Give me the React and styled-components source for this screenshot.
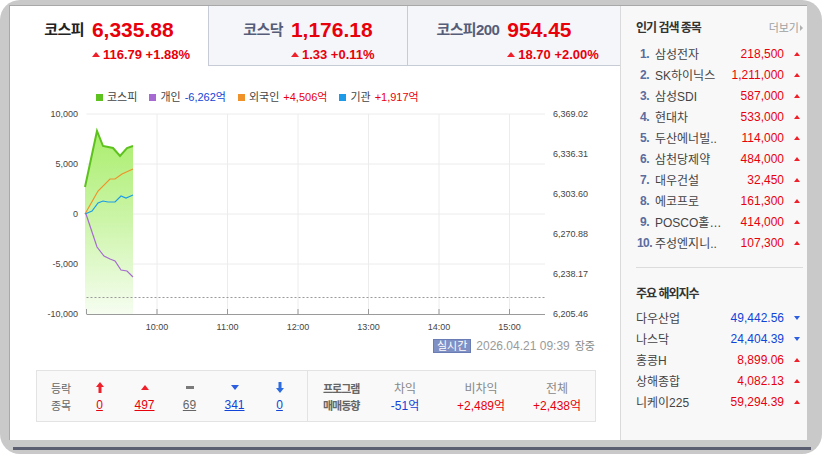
import styled, { createGlobalStyle } from "styled-components";

const GlobalStyle = createGlobalStyle`
    body {
        margin: 0;
        background: #fff;
        font-family: "Liberation Sans", "Noto Sans CJK KR", sans-serif;
    }
`;

const RED = "#e8000b";
const BLUE = "#1144d8";

const Frame = styled.div`
    width: 822px;
    height: 454px;
    box-sizing: border-box;
    background: #c9c9c9;
    border-radius: 20px;
    padding: 5px 15px 4px 9px;
    display: flex;
    flex-direction: column;
    gap: 7px;
`;

const Window = styled.div`
    height: 435px;
    display: flex;
    background: #fff;
    border-top: 1px solid #a8a8a8;
    box-sizing: border-box;
`;

const Ledge = styled.div`
    height: 3px;
    margin: 0 -4px 0 4px;
    background: #5b5e70;
`;

const Main = styled.div`
    width: 611px;
    border-left: 1px solid #a8a8a8;
    box-sizing: border-box;
    display: flex;
    flex-direction: column;
`;

const Tabs = styled.div`
    display: flex;
    height: 60px;
`;

const Tab = styled.div`
    width: ${(p) => p.$w}px;
    box-sizing: border-box;
    background: ${(p) => (p.$active ? "#fff" : "#f5f6fa")};
    border-left: ${(p) => (p.$first ? "none" : "1px solid #c7cbd6")};
    border-bottom: 1px solid ${(p) => (p.$active ? "#fff" : "#c7cbd6")};
    display: flex;
    justify-content: center;
    padding: 12px ${(p) => p.$pr || 0}px 0 0;
`;

const TabGrid = styled.div`
    display: grid;
    grid-template-columns: auto auto;
    column-gap: 8px;
    align-items: center;
    align-content: start;
`;

const TabLabel = styled.div`
    font-size: 15px;
    font-weight: bold;
    letter-spacing: -0.6px;
    line-height: 24px;
    color: ${(p) => (p.$active ? "#222" : "#555d78")};
`;

const TabPrice = styled.div`
    font-size: 21px;
    font-weight: bold;
    line-height: 24px;
    color: ${RED};
`;

const TabChange = styled.div`
    grid-column: 2;
    width: 0;
    white-space: nowrap;
    font-size: 13px;
    font-weight: bold;
    line-height: 15px;
    margin-top: 5px;
    color: ${RED};
    display: flex;
    align-items: center;
    gap: 3px;
`;

const Tri = styled.span`
    display: inline-block;
    width: 0;
    height: 0;
    border-left: ${(p) => p.$s || 4}px solid transparent;
    border-right: ${(p) => p.$s || 4}px solid transparent;
    ${(p) =>
        p.$down
            ? `border-top: ${(p.$s || 4) + 1}px solid #2c5fe0;`
            : `border-bottom: ${(p.$s || 4) + 1}px solid #f0202a;`}
`;

const Body = styled.div`
    padding: 0 24px 0 26px;
    display: flex;
    flex-direction: column;
`;

const Legend = styled.div`
    display: flex;
    gap: 12px;
    margin-top: 24px;
    padding-left: 60px;
    font-size: 11px;
    line-height: 14px;
    color: #444;
`;

const LegendItem = styled.div`
    display: flex;
    align-items: center;
    gap: 4px;
`;

const Swatch = styled.span`
    width: 7px;
    height: 7px;
    background: ${(p) => p.$c};
`;

const Num = styled.span`
    color: ${(p) => p.$c};
    text-decoration: ${(p) => (p.$u ? "underline" : "none")};
`;

const Status = styled.div`
    margin-top: 5px;
    display: flex;
    justify-content: flex-end;
    align-items: center;
    gap: 5px;
    padding-right: 1px;
    line-height: 14px;
`;

const Badge = styled.span`
    background: #7f90c4;
    border: 1px solid #6a7cb4;
    color: #fff;
    font-size: 11px;
    line-height: 12px;
    padding: 0 3px;
`;

const StampText = styled.span`
    color: ${(p) => p.$c};
    font-size: ${(p) => p.$fs}px;
`;

const StatBox = styled.div`
    margin-top: 17px;
    display: flex;
    height: 52px;
    box-sizing: border-box;
    border: 1px solid #e3e3e3;
    background: #f9f9f9;
`;

const RiseFall = styled.div`
    width: 268px;
    border-right: 1px solid #e3e3e3;
    display: grid;
    grid-template-columns: 26px repeat(5, 45px);
    grid-auto-rows: 17px;
    padding: 8px 0 0 14px;
    align-items: center;
    justify-items: center;
    font-size: 12px;
`;

const Program = styled.div`
    display: grid;
    grid-template-columns: 44px repeat(3, 76px);
    grid-auto-rows: 17px;
    padding: 8px 0 0 15px;
    align-items: center;
    justify-items: center;
    font-size: 12px;
`;

const BoxLabel = styled.span`
    justify-self: start;
    font-size: 11px;
    color: #666;
    font-weight: ${(p) => (p.$bold ? "bold" : "normal")};
    letter-spacing: ${(p) => (p.$bold ? "-1px" : "0")};
`;

const ColHead = styled.span`
    color: #888;
    font-size: 12px;
`;

const Side = styled.div`
    width: 187px;
    box-sizing: border-box;
    background: #f8f8f9;
    border-left: 1px solid #dadada;
    padding: 15px 4px 0 15px;
    display: flex;
    flex-direction: column;
`;

const SideHead = styled.div`
    display: flex;
    justify-content: space-between;
    align-items: center;
    line-height: 14px;
    margin-top: ${(p) => p.$mt || 0}px;
`;

const SideTitle = styled.div`
    font-size: 12px;
    font-weight: bold;
    letter-spacing: -1px;
    color: #333;
`;

const More = styled.div`
    font-size: 11px;
    color: #a0a0a0;
    display: flex;
    align-items: center;
    gap: 1px;
    &::after {
        content: "";
        border-top: 3px solid transparent;
        border-bottom: 3px solid transparent;
        border-left: 3px solid #b0b0b0;
    }
`;

const List = styled.div`
    display: flex;
    flex-direction: column;
    margin-top: ${(p) => p.$mt}px;
`;

const Row = styled.div`
    display: flex;
    align-items: center;
    height: 21px;
    font-size: 12px;
`;

const Rank = styled.span`
    width: 17px;
    text-align: center;
    font-weight: bold;
    color: #5b6c9d;
    letter-spacing: -0.5px;
`;

const Name = styled.span`
    flex: 1;
    margin-left: ${(p) => p.$ml || 0}px;
    color: #444;
    white-space: nowrap;
`;

const Value = styled.span`
    color: ${(p) => p.$c};
    margin-right: 7px;
`;

const Mark = styled.span`
    width: 12px;
    display: flex;
    justify-content: center;
    padding-top: 1px;
`;

const Divider = styled.div`
    height: 1px;
    background: #dcdcdc;
    margin-top: 14px;
`;

const popular = [
    ["삼성전자", "218,500"],
    ["SK하이닉스", "1,211,000"],
    ["삼성SDI", "587,000"],
    ["현대차", "533,000"],
    ["두산에너빌..", "114,000"],
    ["삼천당제약", "484,000"],
    ["대우건설", "32,450"],
    ["에코프로", "161,300"],
    ["POSCO홀…", "414,000"],
    ["주성엔지니..", "107,300"],
];

const overseas = [
    ["다우산업", "49,442.56", true],
    ["나스닥", "24,404.39", true],
    ["홍콩H", "8,899.06", false],
    ["상해종합", "4,082.13", false],
    ["니케이225", "59,294.39", false],
];

const X0 = 50.5;
const HOUR = 70.5;
const green = [[49, 83], [61, 27], [67, 42], [77, 44], [84, 52], [91, 44], [97, 42]];
const orange = [[49, 110], [62, 87], [74, 75], [79, 75], [86, 70], [97, 65]];
const blueLine = [[49, 110], [56, 107], [62, 99], [67, 97], [72, 98], [79, 98], [85, 92], [90, 94], [97, 91]];
const purple = [[50, 110], [55, 125], [61, 143], [68, 152], [74, 155], [79, 157], [85, 166], [91, 167], [97, 173]];

const pts = (a) => a.map((p) => p.join(",")).join(" ");

const Chart = () => {
    const hours = [1, 2, 3, 4, 5, 6].map((i) => X0 + HOUR * i);
    const left = ["10,000", "5,000", "0", "-5,000", "-10,000"];
    const right = ["6,369.02", "6,336.31", "6,303.60", "6,270.88", "6,238.17", "6,205.46"];
    return (
        <svg width="560" height="230" style={{ display: "block" }}>
            <defs>
                <linearGradient id="area" x1="0" y1="0" x2="0" y2="1">
                    <stop offset="0" stopColor="#a9ee6c" />
                    <stop offset="0.5" stopColor="#cdf5aa" />
                    <stop offset="1" stopColor="#f6fdf1" />
                </linearGradient>
            </defs>
            {[10, 60, 110, 160].map((y) => (
                <line key={y} x1={X0} x2="509" y1={y} y2={y} stroke="#ececec" />
            ))}
            {hours.map((x) => (
                <line key={x} x1={x} x2={x} y1="10" y2="210" stroke="#ececec" />
            ))}
            <polygon points={`49,210 ${pts(green)} 97,210`} fill="url(#area)" />
            <line x1={X0} x2="509" y1="193.5" y2="193.5" stroke="#9a9a9a" strokeDasharray="2 2" />
            <line x1={X0} x2="509" y1="210.5" y2="210.5" stroke="#9a9a9a" />
            {[X0, ...hours].map((x) => (
                <line key={"t" + x} x1={x} x2={x} y1="205" y2="210" stroke="#9a9a9a" />
            ))}
            <polyline points={pts(purple)} fill="none" stroke="#a66ad2" strokeWidth="1.2" />
            <polyline points={pts(orange)} fill="none" stroke="#f0922a" strokeWidth="1.2" />
            <polyline points={pts(blueLine)} fill="none" stroke="#1e9be8" strokeWidth="1.2" />
            <polyline points={pts(green)} fill="none" stroke="#5ec21e" strokeWidth="2" />
            <g fontSize="9" fill="#444" fontFamily="Liberation Sans, sans-serif">
                {left.map((t, i) => (
                    <text key={t} x="42" y={13 + i * 50} textAnchor="end">{t}</text>
                ))}
                {right.map((t, i) => (
                    <text key={t} x="517" y={13 + i * 40}>{t}</text>
                ))}
                {["10:00", "11:00", "12:00", "13:00", "14:00", "15:00"].map((t, i) => (
                    <text key={t} x={hours[i]} y="226" textAnchor="middle">{t}</text>
                ))}
            </g>
        </svg>
    );
};

const Arrow = ({ down }) => (
    <svg width="8" height="11" viewBox="0 0 8 11">
        <path
            d="M4 0 L8 5 H5.5 V11 H2.5 V5 H0 Z"
            fill={down ? "#2c6be0" : "#f0202a"}
            transform={down ? "rotate(180 4 5.5)" : undefined}
        />
    </svg>
);

const Dash = () => (
    <svg width="8" height="3">
        <rect width="8" height="3" fill="#7a7a7a" />
    </svg>
);

const TabBlock = ({ label, price, change, ...rest }) => (
    <Tab {...rest}>
        <TabGrid>
            <TabLabel $active={rest.$active}>{label}</TabLabel>
            <TabPrice>{price}</TabPrice>
            <TabChange>
                <Tri $s={4} />
                {change}
            </TabChange>
        </TabGrid>
    </Tab>
);

const App = () => {
    return (
        <>
            <GlobalStyle />
            <Frame>
                <Window>
                    <Main>
                        <Tabs>
                            <TabBlock $w={198} $first $active label="코스피" price="6,335.88" change="116.79 +1.88%" />
                            <TabBlock $w={199} label="코스닥" price="1,176.18" change="1.33 +0.11%" />
                            <TabBlock $w={213} $pr={20} label="코스피200" price="954.45" change="18.70 +2.00%" />
                        </Tabs>
                        <Body>
                            <Legend>
                                <LegendItem>
                                    <Swatch $c="#5ec21e" />
                                    코스피
                                </LegendItem>
                                <LegendItem>
                                    <Swatch $c="#a66ad2" />
                                    개인 <Num $c={BLUE}>-6,262억</Num>
                                </LegendItem>
                                <LegendItem>
                                    <Swatch $c="#f0922a" />
                                    외국인 <Num $c={RED}>+4,506억</Num>
                                </LegendItem>
                                <LegendItem>
                                    <Swatch $c="#1e9be8" />
                                    기관 <Num $c={RED}>+1,917억</Num>
                                </LegendItem>
                            </Legend>
                            <Chart />
                            <Status>
                                <Badge>실시간</Badge>
                                <StampText $c="#9a9a9a" $fs={12}>2026.04.21 09:39</StampText>
                                <StampText $c="#888" $fs={11}>장중</StampText>
                            </Status>
                            <StatBox>
                                <RiseFall>
                                    <BoxLabel>등락</BoxLabel>
                                    <Arrow />
                                    <Tri $s={4} />
                                    <Dash />
                                    <Tri $s={4} $down />
                                    <Arrow down />
                                    <BoxLabel>종목</BoxLabel>
                                    <Num $c={RED} $u>0</Num>
                                    <Num $c={RED} $u>497</Num>
                                    <Num $c="#666" $u>69</Num>
                                    <Num $c={BLUE} $u>341</Num>
                                    <Num $c={BLUE} $u>0</Num>
                                </RiseFall>
                                <Program>
                                    <BoxLabel $bold>프로그램</BoxLabel>
                                    <ColHead>차익</ColHead>
                                    <ColHead>비차익</ColHead>
                                    <ColHead>전체</ColHead>
                                    <BoxLabel $bold>매매동향</BoxLabel>
                                    <Num $c={BLUE}>-51억</Num>
                                    <Num $c={RED}>+2,489억</Num>
                                    <Num $c={RED}>+2,438억</Num>
                                </Program>
                            </StatBox>
                        </Body>
                    </Main>
                    <Side>
                        <SideHead>
                            <SideTitle>인기 검색 종목</SideTitle>
                            <More>더보기</More>
                        </SideHead>
                        <List $mt={8}>
                            {popular.map(([n, v], i) => (
                                <Row key={n}>
                                    <Rank>{i + 1}.</Rank>
                                    <Name $ml={2}>{n}</Name>
                                    <Value $c={RED}>{v}</Value>
                                    <Mark>
                                        <Tri $s={3.5} />
                                    </Mark>
                                </Row>
                            ))}
                        </List>
                        <Divider />
                        <SideHead $mt={19}>
                            <SideTitle>주요 해외지수</SideTitle>
                        </SideHead>
                        <List $mt={6}>
                            {overseas.map(([n, v, down]) => (
                                <Row key={n}>
                                    <Name>{n}</Name>
                                    <Value $c={down ? BLUE : RED}>{v}</Value>
                                    <Mark>
                                        <Tri $s={3.5} $down={down} />
                                    </Mark>
                                </Row>
                            ))}
                        </List>
                    </Side>
                </Window>
                <Ledge />
            </Frame>
        </>
    );
};

export default App;
